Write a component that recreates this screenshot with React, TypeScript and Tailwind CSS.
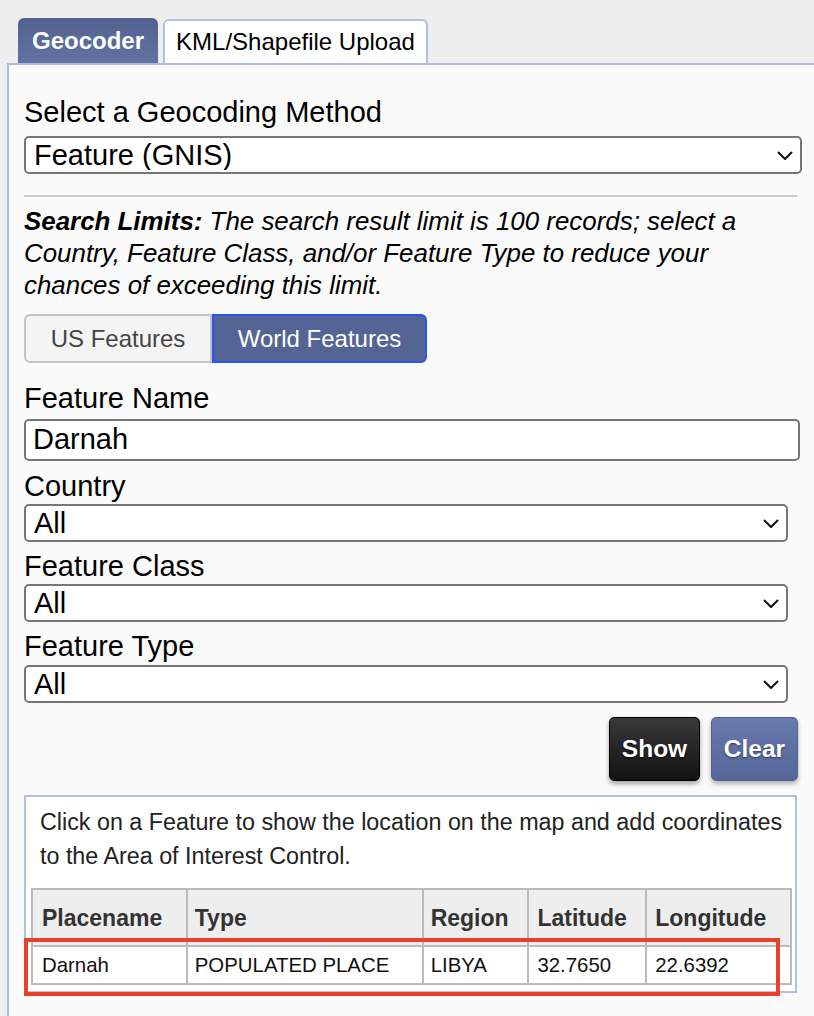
import React, { useState } from 'react';

const font = { fontFamily: '"Liberation Sans", Arial, Helvetica, sans-serif' };

interface SelectBoxProps {
  value: string;
  options: string[];
  width: string;
  onChange: (v: string) => void;
}

const Chevron: React.FC = () => (
  <svg width="16" height="10" viewBox="0 0 16 10" fill="none">
    <path d="M1.5 1.5 L8 8 L14.5 1.5" stroke="#111" strokeWidth="2" strokeLinecap="round" strokeLinejoin="round" />
  </svg>
);

const SelectBox: React.FC<SelectBoxProps> = ({ value, options, width, onChange }) => (
  <div className={`relative h-[38px] ${width}`}>
    <select
      value={value}
      onChange={e => onChange(e.target.value)}
      className="h-full w-full appearance-none rounded-[5px] border-2 border-[#767676] bg-white pl-[8px] text-[29px] leading-none text-black outline-none"
      style={font}
    >
      {options.map(o => (
        <option key={o}>{o}</option>
      ))}
    </select>
    <div className="pointer-events-none absolute right-[9px] top-[15px]">
      <Chevron />
    </div>
  </div>
);

const App: React.FC = () => {
  const [method, setMethod] = useState('Feature (GNIS)');
  const [scope, setScope] = useState<'us' | 'world'>('world');
  const [name, setName] = useState('Darnah');
  const [country, setCountry] = useState('All');
  const [featureClass, setFeatureClass] = useState('All');
  const [featureType, setFeatureType] = useState('All');

  const label = 'h-[34px] text-[29px] leading-[34px] text-black';

  return (
    <div className="min-h-[1016px] w-[814px] overflow-hidden bg-[#eeeeee]" style={font}>
      {/* tabs */}
      <div className="flex items-end pl-[18px] pt-[18px]">
        <div className="flex h-[45px] w-[140px] items-center justify-center rounded-t-[6px] bg-gradient-to-b from-[#52628f] to-[#6273a3] text-[24px] font-bold text-white">
          Geocoder
        </div>
        <div className="ml-[5px] flex h-[44px] w-[265px] items-center justify-center rounded-t-[6px] border-2 border-b-0 border-[#b3bfdf] bg-white text-[24px] text-black">
          KML/Shapefile Upload
        </div>
      </div>

      {/* panel */}
      <div className="ml-[7px] min-h-[953px] border-l-2 border-t-2 border-[#aebbdc] bg-[#fafafa] pl-[15px] pt-[30px]">
        <div className={label}>Select a Geocoding Method</div>
        <div className="mt-[7px]">
          <SelectBox
            value={method}
            onChange={setMethod}
            width="w-[778px]"
            options={['Feature (GNIS)', 'Address', 'Coordinates']}
          />
        </div>
        <div className="mt-[21px] h-[2px] w-[773px] bg-[#cccccc]" />

        <p className="mt-[8px] w-[760px] text-[25.9px] italic leading-[32px] text-black">
          <span className="font-bold">Search Limits:</span> The search result limit is 100 records; select a
          Country, Feature Class, and/or Feature Type to reduce your chances of exceeding this limit.
        </p>

        <div className="mt-[13px] flex h-[49px]">
          <button
            onClick={() => setScope('us')}
            className={`w-[188px] rounded-l-[6px] border-2 text-[24px] ${
              scope === 'us'
                ? 'border-[#2356f5] bg-[#546494] text-white'
                : 'border-[#c3c3c3] bg-[#f4f4f4] text-[#444444]'
            }`}
          >
            US Features
          </button>
          <button
            onClick={() => setScope('world')}
            className={`w-[215px] rounded-r-[6px] border-2 text-[24px] ${
              scope === 'world'
                ? 'border-[#2356f5] bg-[#546494] text-white'
                : 'border-[#c3c3c3] bg-[#f4f4f4] text-[#444444]'
            }`}
          >
            World Features
          </button>
        </div>

        <div className={`mt-[18px] ${label}`}>Feature Name</div>
        <input
          value={name}
          onChange={e => setName(e.target.value)}
          className="mt-[4px] block h-[42px] w-[776px] rounded-[5px] border-2 border-[#767676] bg-white px-[7px] text-[29px] text-black outline-none"
          style={font}
        />

        <div className={`mt-[8px] ${label}`}>Country</div>
        <div className="mt-[1px]">
          <SelectBox value={country} onChange={setCountry} width="w-[764px]" options={['All', 'Libya', 'Egypt']} />
        </div>

        <div className={`mt-[7px] ${label}`}>Feature Class</div>
        <div className="mt-[1px]">
          <SelectBox
            value={featureClass}
            onChange={setFeatureClass}
            width="w-[764px]"
            options={['All', 'Populated Place', 'Hydrographic']}
          />
        </div>

        <div className={`mt-[7px] ${label}`}>Feature Type</div>
        <div className="mt-[2px]">
          <SelectBox value={featureType} onChange={setFeatureType} width="w-[764px]" options={['All', 'City', 'Town']} />
        </div>

        <div className="mt-[14px] flex w-[774px] justify-end gap-[11px]">
          <button className="h-[64px] w-[91px] rounded-[5px] border border-black bg-gradient-to-b from-[#3a3a3a] to-[#121212] text-[24.5px] font-bold text-white shadow-[0_3px_5px_rgba(0,0,0,0.35)] [text-shadow:0_1px_2px_rgba(0,0,0,0.8)]">
            Show
          </button>
          <button className="h-[64px] w-[87px] rounded-[5px] border border-[#52628f] bg-gradient-to-b from-[#6879aa] to-[#55669a] text-[24.5px] font-bold text-white shadow-[0_3px_5px_rgba(0,0,0,0.3)] [text-shadow:0_1px_2px_rgba(0,0,0,0.5)]">
            Clear
          </button>
        </div>

        {/* results */}
        <div className="relative mt-[14px] w-[773px] border-2 border-[#b4c0e0] bg-white pb-[6px] pt-[8px]">
          <p className="pl-[14px] pr-[6px] text-[23.3px] leading-[34px] text-[#222222]">
            Click on a Feature to show the location on the map and add coordinates to the Area of Interest Control.
          </p>
          <table className="ml-[5px] mt-[15px] w-[761px] border-collapse border-2 border-[#bbbbbb] text-left">
            <thead>
              <tr className="h-[57px] bg-[#eeeeee] text-[23px] font-bold text-[#333333]">
                <th className="w-[155px] border-2 border-[#bbbbbb] pl-[9px] pt-[2px]">Placename</th>
                <th className="w-[237px] border-2 border-[#bbbbbb] pl-[7px] pt-[2px]">Type</th>
                <th className="w-[106px] border-2 border-[#bbbbbb] pl-[7px] pt-[2px]">Region</th>
                <th className="w-[118px] border-2 border-[#bbbbbb] pl-[8px] pt-[2px]">Latitude</th>
                <th className="w-[145px] border-2 border-[#bbbbbb] pl-[8px] pt-[2px]">Longitude</th>
              </tr>
            </thead>
            <tbody>
              <tr className="h-[38px] bg-white text-[20.4px] text-[#111111]">
                <td className="border-2 border-[#bbbbbb] pl-[9px]">Darnah</td>
                <td className="border-2 border-[#bbbbbb] pl-[7px]">POPULATED PLACE</td>
                <td className="border-2 border-[#bbbbbb] pl-[7px]">LIBYA</td>
                <td className="border-2 border-[#bbbbbb] pl-[8px]">32.7650</td>
                <td className="border-2 border-[#bbbbbb] pl-[8px]">22.6392</td>
              </tr>
            </tbody>
          </table>
          {/* highlight annotation */}
          <div className="pointer-events-none absolute left-[-2px] top-[141px] h-[58px] w-[756px] border-4 border-[#e8412b]" />
        </div>
      </div>
    </div>
  );
};

export default App;
